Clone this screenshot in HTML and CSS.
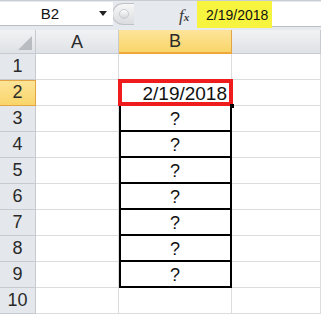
FILE: index.html
```html
<!DOCTYPE html>
<html lang="en">
<head>
  <meta charset="UTF-8">
  <title>Sheet</title>
  <link rel="stylesheet" href="styles.css">
</head>
<body>
  <div class="formula-bar">
    <div class="name-box">
      <span class="name">B2</span>
      <svg class="arrow" width="8" height="5" viewBox="0 0 8 5"><path d="M0 0H8L4 5Z" fill="#222"/></svg>
    </div>
    <div class="knob"><span class="knob-dot"></span></div>
    <div class="fx"><i>f</i><span class="fx-x">x</span></div>
    <div class="formula-input"><span class="hl">2/19/2018</span></div>
  </div>

  <div class="sheet">
    <div class="hd corner"><span class="tri"></span></div>
    <div class="hd col">A</div>
    <div class="hd col active">B</div>
    <div class="hd col"></div>

    <div class="hd row">1</div><div class="cell"></div><div class="cell"></div><div class="cell"></div>
    <div class="hd row active">2</div><div class="cell"></div><div class="cell date"><span class="sel"></span><span class="handle"></span>2/19/2018</div><div class="cell"></div>
    <div class="hd row">3</div><div class="cell"></div><div class="cell boxed">?</div><div class="cell"></div>
    <div class="hd row">4</div><div class="cell"></div><div class="cell boxed">?</div><div class="cell"></div>
    <div class="hd row">5</div><div class="cell"></div><div class="cell boxed">?</div><div class="cell"></div>
    <div class="hd row">6</div><div class="cell"></div><div class="cell boxed">?</div><div class="cell"></div>
    <div class="hd row">7</div><div class="cell"></div><div class="cell boxed">?</div><div class="cell"></div>
    <div class="hd row">8</div><div class="cell"></div><div class="cell boxed">?</div><div class="cell"></div>
    <div class="hd row">9</div><div class="cell"></div><div class="cell boxed">?</div><div class="cell"></div>
    <div class="hd row">10</div><div class="cell"></div><div class="cell"></div><div class="cell"></div>
  </div>
</body>
</html>
```

FILE: styles.css
```css
body {
  margin: 0;
  font-family: "Liberation Sans", Arial, sans-serif;
  color: #111;
  background: #fff;
  width: 321px;
  overflow: hidden;
}

/* formula bar */
.formula-bar {
  height: 30px;
  box-sizing: border-box;
  background: #e6e9ed;
  border-top: 1px solid #c9cdd2;
  padding-top: 1px;
  display: flex;
  align-items: flex-start;
}
.name-box {
  width: 113px;
  height: 23px;
  background: #fff;
  border-bottom: 1px solid #b9bec4;
  display: flex;
  align-items: center;
  position: relative;
}
.name {
  width: 97px;
  padding-left: 3px;
  box-sizing: border-box;
  text-align: center;
  font-size: 15px;
  color: #111;
}
.arrow { margin-left: 2px; }
.knob {
  width: 22px;
  height: 22px;
  margin-left: -1px;
  margin-top: 1px;
  border: 1px solid #bfc3c8;
  border-right: none;
  border-radius: 12px 0 0 12px;
  background: linear-gradient(#f7f7f7, #dadcdf);
  display: flex;
  align-items: center;
  padding-left: 6px;
  box-sizing: border-box;
}
.knob-dot {
  width: 8px;
  height: 8px;
  border-radius: 50%;
  background: linear-gradient(#fdfdfd, #d5d7da);
  border: 1px solid #c8cbcf;
}
.fx {
  width: 63px;
  padding-left: 45px;
  box-sizing: border-box;
  font-family: "Liberation Serif", serif;
  font-size: 17px;
  color: #3a3a3a;
  line-height: 27px;
}
.fx-x { font-size: 11px; font-style: italic; font-weight: bold; }
.formula-input {
  flex: 1;
  height: 24px;
  background: #fff;
  border-bottom: 1px solid #b9bec4;
  position: relative;
}
.hl {
  display: block;
  width: 75px;
  height: 27px;
  margin-top: -1px;
  background: #f7f43f;
  font-size: 14px;
  line-height: 28px;
  padding-left: 9px;
  box-sizing: border-box;
  color: #111;
}

/* grid */
.sheet {
  display: grid;
  grid-template-columns: 36px 83px 113px 89px;
  grid-template-rows: 24px repeat(10, 26px);
}
.hd {
  background: linear-gradient(#f1f2f4, #dfe2e6);
  border-right: 1px solid #c7cbd0;
  border-bottom: 1px solid #c7cbd0;
  display: flex;
  align-items: center;
  justify-content: center;
  font-size: 18px;
  color: #2a2a2a;
}
.hd.row { background: #e4e7eb; }
.hd.col { padding-top: 1px; }
.hd.active {
  background: linear-gradient(#fde49a, #f9d56a);
  border-right-color: #e3a444;
  border-bottom-color: #e3a444;
}
.hd.col.active { border-bottom: 2px solid #f0a73a; }
.hd.row.active { box-shadow: inset 0 1px #e3a444; }
.corner { position: relative; }
.tri {
  position: absolute;
  right: 3px;
  bottom: 3px;
  width: 0;
  height: 0;
  border-left: 14px solid transparent;
  border-bottom: 14px solid #b9bdc2;
}
.cell {
  border-right: 1px solid #dadcdd;
  border-bottom: 1px solid #dadcdd;
  display: flex;
  align-items: center;
  justify-content: center;
  font-size: 18px;
  color: #111;
}
.date {
  position: relative;
  justify-content: flex-end;
  padding-right: 4px;
  font-size: 19px;
  padding-top: 2px;
}
.sel {
  position: absolute;
  top: -1px;
  left: -1px;
  right: -2px;
  bottom: -1px;
  border: 4px solid #ee1c1c;
}
.handle {
  position: absolute;
  right: -3px;
  bottom: -3px;
  width: 4px;
  height: 4px;
  background: #000;
}
.boxed {
  border-right-color: #000;
  border-bottom-color: #000;
  box-shadow: inset 2px 0 #000, inset -1px 0 #000, inset 0 -1px #000;
  padding-top: 2px;
}
```
